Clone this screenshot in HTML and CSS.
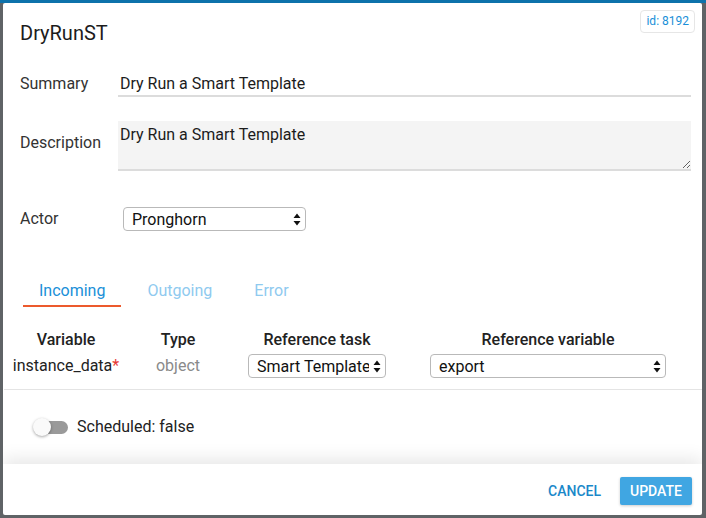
FILE: index.html
```html
<!DOCTYPE html>
<html lang="en">
<head>
    <meta charset="UTF-8">
    <title>DryRunST</title>
    <link rel="stylesheet" href="styles.css">
</head>
<body>
    <div class="dialog">
        <div class="dialog-body">
            <div class="header">
                <h2 class="title">DryRunST</h2>
                <span class="badge">id: 8192</span>
            </div>

            <div class="form-row row-summary">
                <label class="label">Summary</label>
                <input class="text-input" type="text" value="Dry Run a Smart Template">
            </div>

            <div class="form-row row-description">
                <label class="label label-top">Description</label>
                <textarea class="text-area">Dry Run a Smart Template</textarea>
            </div>

            <div class="form-row row-actor">
                <label class="label">Actor</label>
                <span class="select-wrap actor-select">
                    <select class="select"><option>Pronghorn</option></select>
                    <svg class="arrows" width="8" height="13" viewBox="0 0 8 13"><path d="M4 0.5L7.5 5H0.5Z M4 12.5L7.5 8H0.5Z" fill="#111"/></svg>
                </span>
            </div>

            <div class="tabs">
                <div class="tab active">Incoming</div>
                <div class="tab">Outgoing</div>
                <div class="tab">Error</div>
            </div>

            <div class="var-table">
                <div class="th">Variable</div>
                <div class="th">Type</div>
                <div class="th">Reference task</div>
                <div class="th">Reference variable</div>

                <div class="td">instance_data<span class="req">*</span></div>
                <div class="td muted">object</div>
                <div class="td">
                    <span class="select-wrap task-select">
                        <select class="select"><option>Smart Template</option></select>
                        <svg class="arrows" width="8" height="13" viewBox="0 0 8 13"><path d="M4 0.5L7.5 5H0.5Z M4 12.5L7.5 8H0.5Z" fill="#111"/></svg>
                    </span>
                </div>
                <div class="td">
                    <span class="select-wrap refvar-select">
                        <select class="select"><option>export</option></select>
                        <svg class="arrows" width="8" height="13" viewBox="0 0 8 13"><path d="M4 0.5L7.5 5H0.5Z M4 12.5L7.5 8H0.5Z" fill="#111"/></svg>
                    </span>
                </div>
            </div>

            <div class="schedule">
                <span class="toggle"><span class="knob"></span></span>
                <span class="schedule-text">Scheduled: false</span>
            </div>
        </div>

        <div class="footer">
            <button class="btn-flat">Cancel</button>
            <button class="btn-raised">Update</button>
        </div>
    </div>
</body>
</html>
```

FILE: styles.css
```css
body {
    margin: 0;
    padding: 3px 4px 3px 3px;
    background: linear-gradient(#0d72ab 0 3px, #5f6366 3px);
    font-family: Roboto, "Liberation Sans", sans-serif;
    color: #222;
}
.dialog {
    width: 699px;
    height: 512px;
    background: #fff;
    border-radius: 2px;
    display: flex;
    flex-direction: column;
    overflow: hidden;
}
.dialog-body {
    height: 461px;
    flex: none;
}
.header {
    display: flex;
    justify-content: space-between;
    align-items: flex-start;
    padding: 7px 7px 0 17px;
}
.title {
    margin: 11px 0 0;
    font-size: 20px;
    font-weight: 400;
    line-height: 24px;
    color: #1c1c1c;
}
.badge {
    font-size: 12px;
    line-height: 21px;
    padding: 0 5px;
    color: #1a8fd8;
    border: 1px solid #e6e6e6;
    border-radius: 4px;
}
.form-row {
    display: flex;
    align-items: center;
    padding: 0 11px 0 17px;
}
.label {
    width: 98px;
    flex: none;
    font-size: 16px;
    line-height: 20px;
    color: #333;
}
.label-top {
    align-self: flex-start;
    margin-top: 12px;
}
.row-summary {
    margin-top: 26px;
}
.text-input {
    flex: 1;
    height: 26px;
    box-sizing: border-box;
    border: none;
    border-bottom: 2px solid #dcdcdc;
    padding: 0 2px;
    font: 16px Roboto, "Liberation Sans", sans-serif;
    color: #1c1c1c;
    outline: none;
}
.row-description {
    margin-top: 24px;
}
.text-area {
    flex: 1;
    height: 50px;
    box-sizing: border-box;
    border: none;
    border-bottom: 2px solid #dcdcdc;
    background: #f4f4f4;
    padding: 4px 2px 0;
    font: 16px/20px Roboto, "Liberation Sans", sans-serif;
    color: #1c1c1c;
    resize: vertical;
    outline: none;
}
.row-actor {
    margin-top: 36px;
}
.select-wrap {
    position: relative;
    display: inline-block;
}
.select {
    -webkit-appearance: none;
    appearance: none;
    width: 100%;
    height: 24px;
    box-sizing: border-box;
    border: 1px solid #b9b9b9;
    border-radius: 4px;
    background: #fff;
    padding: 0 16px 0 8px;
    font: 16px Roboto, "Liberation Sans", sans-serif;
    color: #111;
    outline: none;
}
.arrows {
    position: absolute;
    right: 5px;
    top: 6px;
}
.actor-select {
    width: 183px;
    margin-left: 5px;
}
.task-select {
    width: 138px;
}
.refvar-select {
    width: 236px;
}
.tabs {
    display: flex;
    gap: 10px;
    margin: 42px 0 0 20px;
}
.tab {
    padding: 8px 16px 4px;
    font-size: 16px;
    line-height: 20px;
    color: #8fcaef;
    border-bottom: 2px solid transparent;
}
.tab.active {
    color: #1a8fd8;
    border-bottom-color: #ec5a2d;
}
.var-table {
    display: grid;
    grid-template-columns: 124px 100px 178px 284px;
    row-gap: 4px;
    margin: 23px 0 0 1px;
    padding-bottom: 10px;
    border-bottom: 1px solid #e4e4e4;
    text-align: center;
}
.th {
    font-size: 16px;
    font-weight: 500;
    line-height: 20px;
    color: #222;
}
.td {
    font-size: 16px;
    line-height: 24px;
    color: #222;
}
.muted {
    color: #8a8a8a;
}
.req {
    color: #e53935;
}
.schedule {
    display: flex;
    align-items: center;
    margin: 27px 0 0 30px;
}
.toggle {
    position: relative;
    width: 35px;
    height: 18px;
}
.toggle::before {
    content: "";
    position: absolute;
    left: 5px;
    right: 0;
    top: 3px;
    height: 13px;
    border-radius: 7px;
    background: #9a9a9a;
}
.knob {
    position: absolute;
    left: 0;
    top: 0;
    width: 18px;
    height: 18px;
    border-radius: 50%;
    background: #fafafa;
    box-shadow: 0 1px 3px rgba(0, 0, 0, 0.35);
}
.schedule-text {
    margin-left: 9px;
    font-size: 16px;
    line-height: 20px;
    color: #222;
}
.footer {
    flex: 1;
    display: flex;
    justify-content: flex-end;
    align-items: flex-start;
    gap: 11px;
    padding: 13px 10px 0 0;
    box-shadow: 0 -6px 16px rgba(0, 0, 0, 0.09);
    position: relative;
}
.btn-flat, .btn-raised {
    height: 28px;
    border: none;
    border-radius: 2px;
    font: 500 14px Roboto, "Liberation Sans", sans-serif;
    text-transform: uppercase;
    cursor: pointer;
}
.btn-flat {
    background: none;
    color: #1a88c9;
    padding: 0 8px;
}
.btn-raised {
    width: 72px;
    background: #40a6e2;
    color: #fff;
    box-shadow: 0 1px 3px rgba(0, 0, 0, 0.2);
}
```
